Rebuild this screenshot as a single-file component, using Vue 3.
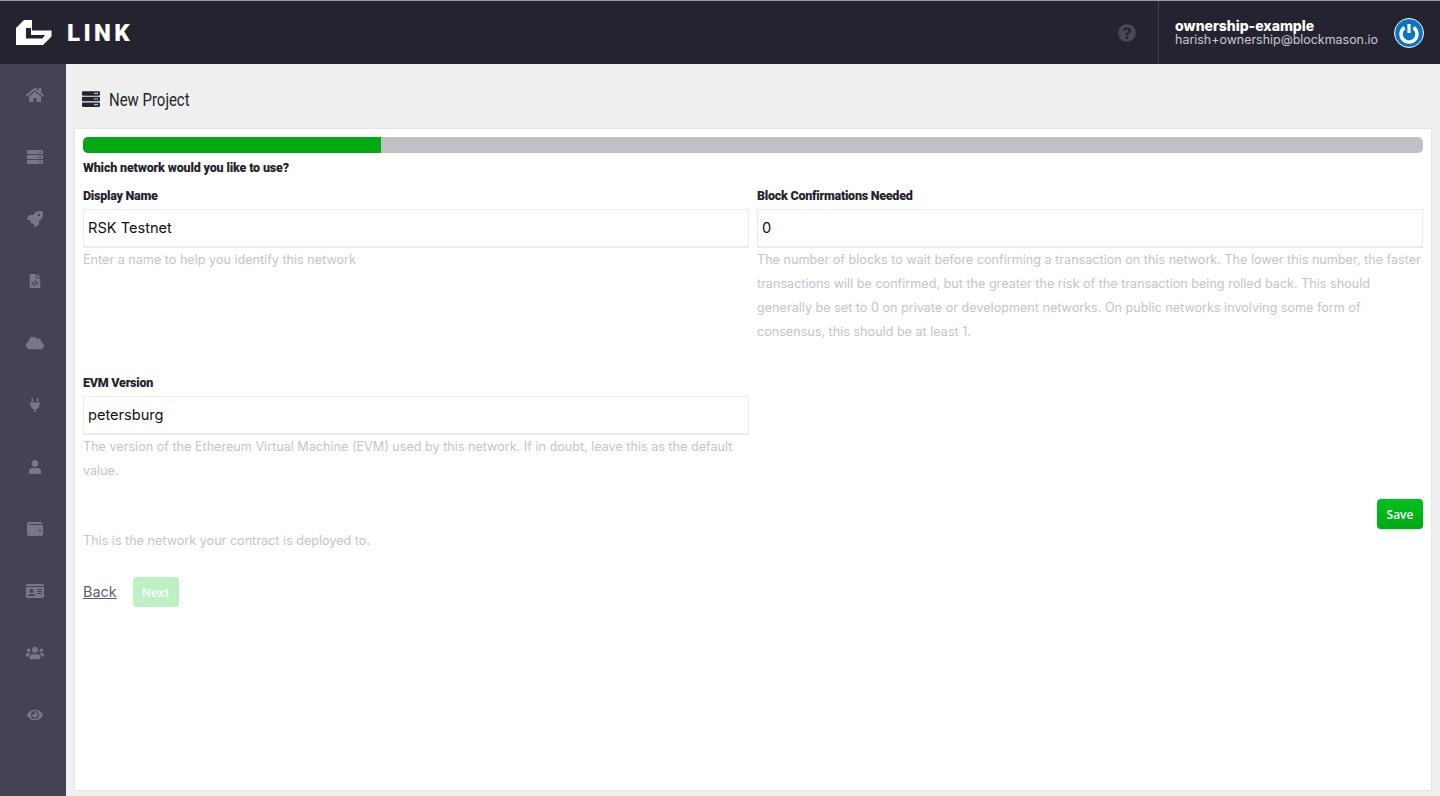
<script setup>
const navIcons = [
  { name: 'home', box: '0 0 576 512', size: 18, d: 'M280.37 148.26L96 300.11V464a16 16 0 0 0 16 16l112.06-.29a16 16 0 0 0 15.92-16V368a16 16 0 0 1 16-16h64a16 16 0 0 1 16 16v95.64a16 16 0 0 0 16 16.05L464 480a16 16 0 0 0 16-16V300L295.67 148.26a12.19 12.19 0 0 0-15.3 0zM571.6 251.47L488 182.56V44.05a12 12 0 0 0-12-12h-56a12 12 0 0 0-12 12v72.61L318.47 43a48 48 0 0 0-61 0L4.34 251.47a12 12 0 0 0-1.6 16.9l25.5 31A12 12 0 0 0 45.15 301l235.22-193.74a12.19 12.19 0 0 1 15.3 0L530.9 301a12 12 0 0 0 16.9-1.6l25.5-31a12 12 0 0 0-1.7-16.93z' },
  { name: 'server', box: '0 0 512 512', size: 16, d: 'M480 160H32c-17.673 0-32-14.327-32-32V64c0-17.673 14.327-32 32-32h448c17.673 0 32 14.327 32 32v64c0 17.673-14.327 32-32 32zm-48-88c-13.255 0-24 10.745-24 24s10.745 24 24 24 24-10.745 24-24-10.745-24-24-24zm-64 0c-13.255 0-24 10.745-24 24s10.745 24 24 24 24-10.745 24-24-10.745-24-24-24zm112 248H32c-17.673 0-32-14.327-32-32v-64c0-17.673 14.327-32 32-32h448c17.673 0 32 14.327 32 32v64c0 17.673-14.327 32-32 32zm-48-88c-13.255 0-24 10.745-24 24s10.745 24 24 24 24-10.745 24-24-10.745-24-24-24zm-64 0c-13.255 0-24 10.745-24 24s10.745 24 24 24 24-10.745 24-24-10.745-24-24-24zm112 248H32c-17.673 0-32-14.327-32-32v-64c0-17.673 14.327-32 32-32h448c17.673 0 32 14.327 32 32v64c0 17.673-14.327 32-32 32zm-48-88c-13.255 0-24 10.745-24 24s10.745 24 24 24 24-10.745 24-24-10.745-24-24-24zm-64 0c-13.255 0-24 10.745-24 24s10.745 24 24 24 24-10.745 24-24-10.745-24-24-24z' },
  { name: 'rocket', box: '0 0 512 512', size: 16, d: 'M505.12 19.09c-1.19-5.53-6.66-11-12.21-12.19C460.72 0 435.51 0 410.41 0 307.18 0 245.27 55.2 199.05 128H94.84c-16.35.02-35.56 11.88-42.89 26.48L2.52 253.3A28.4 28.4 0 0 0 0 264a24 24 0 0 0 24.01 24h103.81l-22.47 22.47c-11.37 11.36-13 32.26 0 45.25l50.9 50.91c11.16 11.19 32.16 13.16 45.28 0L224 384.16V488a24 24 0 0 0 24 24 28.56 28.56 0 0 0 10.71-2.52l98.73-49.39c14.63-7.3 26.51-26.5 26.51-42.86V312.8c72.6-46.31 128.03-108.41 128.03-211.1.1-25.2.1-50.4-6.86-82.61zM384.04 168a40 40 0 1 1 40.01-40 40.02 40.02 0 0 1-40.01 40z' },
  { name: 'file-code', box: '0 0 384 512', size: 14, d: 'M384 121.941V128H256V0h6.059c6.365 0 12.47 2.529 16.971 7.029l97.941 97.941A24.005 24.005 0 0 1 384 121.941zM248 160c-13.2 0-24-10.8-24-24V0H24C10.745 0 0 10.745 0 24v464c0 13.255 10.745 24 24 24h336c13.255 0 24-10.745 24-24V160H248zM123.206 400.505a5.4 5.4 0 0 1-7.633.246l-64.866-60.812a5.4 5.4 0 0 1 0-7.879l64.866-60.812a5.4 5.4 0 0 1 7.633.246l19.579 20.885a5.4 5.4 0 0 1-.372 7.747L101.65 336l40.763 35.874a5.4 5.4 0 0 1 .372 7.747l-19.579 20.884zm51.295 50.479l-27.453-7.97a5.402 5.402 0 0 1-3.681-6.692l61.44-211.626a5.402 5.402 0 0 1 6.692-3.681l27.452 7.97a5.4 5.4 0 0 1 3.68 6.692l-61.44 211.626a5.397 5.397 0 0 1-6.69 3.681zm160.792-111.045l-64.866 60.812a5.4 5.4 0 0 1-7.633-.246l-19.58-20.885a5.4 5.4 0 0 1 .372-7.747L284.35 336l-40.763-35.874a5.4 5.4 0 0 1-.372-7.747l19.58-20.885a5.4 5.4 0 0 1 7.633-.246l64.866 60.812a5.4 5.4 0 0 1-.001 7.879z' },
  { name: 'cloud', box: '0 0 640 512', size: 18, d: 'M537.6 226.6c4.1-10.7 6.4-22.4 6.4-34.6 0-53-43-96-96-96-19.7 0-38.1 6-53.3 16.2C367 64.2 315.3 32 256 32c-88.4 0-160 71.6-160 160 0 2.7.1 5.4.2 8.1C40.2 219.8 0 273.2 0 336c0 79.5 64.5 144 144 144h368c70.7 0 128-57.3 128-128 0-61.9-44-113.6-102.4-125.4z' },
  { name: 'plug', box: '0 0 384 512', size: 14, d: 'M320 32a32 32 0 0 0-64 0v96h64zm48 128H16a16 16 0 0 0-16 16v32a16 16 0 0 0 16 16h16v32a160.07 160.07 0 0 0 128 156.8V512h64v-99.2A160.07 160.07 0 0 0 352 256v-32h16a16 16 0 0 0 16-16v-32a16 16 0 0 0-16-16zM128 32a32 32 0 0 0-64 0v96h64z' },
  { name: 'user', box: '0 0 448 512', size: 14, d: 'M224 256c70.7 0 128-57.3 128-128S294.7 0 224 0 96 57.3 96 128s57.3 128 128 128zm89.6 32h-16.7c-22.2 10.2-46.9 16-72.9 16s-50.6-5.8-72.9-16h-16.7C60.2 288 0 348.2 0 422.4V464c0 26.5 21.5 48 48 48h352c26.5 0 48-21.5 48-48v-41.6c0-74.2-60.2-134.4-134.4-134.4z' },
  { name: 'wallet', box: '0 0 512 512', size: 16, d: 'M461.2 128H80c-8.84 0-16-7.16-16-16s7.16-16 16-16h384c8.84 0 16-7.16 16-16 0-26.51-21.49-48-48-48H64C28.65 32 0 60.65 0 96v320c0 35.35 28.65 64 64 64h397.2c28.02 0 50.8-21.53 50.8-48V176c0-26.47-22.78-48-50.8-48zM416 340c-17.67 0-32-14.33-32-32s14.33-32 32-32 32 14.33 32 32-14.33 32-32 32z' },
  { name: 'id-card', box: '0 0 576 512', size: 18, d: 'M528 32H48C21.5 32 0 53.5 0 80v16h576V80c0-26.5-21.5-48-48-48zM0 432c0 26.5 21.5 48 48 48h480c26.5 0 48-21.5 48-48V128H0v304zm352-232c0-4.4 3.6-8 8-8h144c4.4 0 8 3.6 8 8v16c0 4.4-3.6 8-8 8H360c-4.4 0-8-3.6-8-8v-16zm0 64c0-4.4 3.6-8 8-8h144c4.4 0 8 3.6 8 8v16c0 4.4-3.6 8-8 8H360c-4.4 0-8-3.6-8-8v-16zm0 64c0-4.4 3.6-8 8-8h144c4.4 0 8 3.6 8 8v16c0 4.4-3.6 8-8 8H360c-4.4 0-8-3.6-8-8v-16zM176 192c35.3 0 64 28.7 64 64s-28.7 64-64 64-64-28.7-64-64 28.7-64 64-64zM67.1 396.2C75.5 370.5 99.6 352 128 352h8.2c12.3 5.1 25.7 8 39.8 8s27.6-2.9 39.8-8h8.2c28.4 0 52.5 18.5 60.9 44.2 3.2 9.9-5.2 19.8-15.6 19.8H82.7c-10.4 0-18.8-10-15.6-19.8z' },
  { name: 'users', box: '0 0 640 512', size: 18, d: 'M96 224c35.3 0 64-28.7 64-64s-28.7-64-64-64-64 28.7-64 64 28.7 64 64 64zm448 0c35.3 0 64-28.7 64-64s-28.7-64-64-64-64 28.7-64 64 28.7 64 64 64zm32 32h-64c-17.6 0-33.5 7.1-45.1 18.6 40.3 22.1 68.9 62 75.1 109.4h66c17.7 0 32-14.3 32-32v-32c0-35.3-28.7-64-64-64zm-256 0c61.9 0 112-50.1 112-112S381.9 32 320 32 208 82.1 208 144s50.1 112 112 112zm76.8 32h-8.3c-20.8 10-43.9 16-68.5 16s-47.6-6-68.5-16h-8.3C179.6 288 128 339.6 128 403.2V432c0 26.5 21.5 48 48 48h288c26.5 0 48-21.5 48-48v-28.8c0-63.6-51.6-115.2-115.2-115.2zm-223.7-13.4C161.5 263.1 145.6 256 128 256H64c-35.3 0-64 28.7-64 64v32c0 17.7 14.3 32 32 32h65.9c6.3-47.4 34.9-87.3 75.2-109.4z' },
  { name: 'eye', box: '0 0 576 512', size: 16, d: 'M572.52 241.4C518.29 135.59 410.93 64 288 64S57.68 135.64 3.48 241.41a32.35 32.35 0 0 0 0 29.19C57.71 376.41 165.07 448 288 448s230.32-71.64 284.52-177.41a32.35 32.35 0 0 0 0-29.19zM288 400a144 144 0 1 1 144-144 143.93 143.93 0 0 1-144 144zm0-240a95.31 95.31 0 0 0-25.31 3.79 47.85 47.85 0 0 1-66.9 66.9A95.78 95.78 0 1 0 288 160z' }
]
const serverPath = navIcons[1].d
const questionPath = 'M504 256c0 136.997-111.043 248-248 248S8 392.997 8 256C8 119.083 119.043 8 256 8s248 111.083 248 248zM262.655 90c-54.497 0-89.255 22.957-116.549 63.758-3.536 5.286-2.353 12.415 2.715 16.258l34.699 26.31c5.205 3.947 12.621 3.008 16.665-2.122 17.864-22.658 30.113-35.797 57.303-35.797 20.429 0 45.698 13.148 45.698 32.958 0 14.976-12.363 22.667-32.534 33.976C247.128 238.528 216 254.941 216 296v4c0 6.627 5.373 12 12 12h56c6.627 0 12-5.373 12-12v-1.333c0-28.462 83.186-29.647 83.186-106.667 0-58.002-60.165-102-116.531-102zM256 338c-25.365 0-46 20.635-46 46 0 25.364 20.635 46 46 46s46-20.636 46-46c0-25.365-20.635-46-46-46z'
</script>

<template>
  <div class="page">
    <header class="topbar">
      <div class="brand">
        <svg class="logo" viewBox="0 0 36 25" width="36" height="25">
          <path fill="#fff" fill-rule="evenodd" d="M0 8 L8 0 H16 V10.5 H35.5 V16.5 L27 25 H0 Z M10 8 H15 V15 H29 L26.5 18.5 H10 Z" />
        </svg>
        <span class="brand_name">LINK</span>
      </div>
      <div class="topbar_right">
        <svg class="help" viewBox="0 0 512 512" width="18" height="18"><path fill="#4b4956" :d="questionPath" /></svg>
        <div class="account">
          <div class="account_text">
            <div class="account_name">ownership-example</div>
            <div class="account_mail">harish+ownership@blockmason.io</div>
          </div>
          <svg class="avatar" viewBox="0 0 30 30" width="30" height="30">
            <circle cx="15" cy="15" r="14.5" fill="#0a74bd" stroke="#fff" stroke-width="1" />
            <path d="M10.5 9.5 A8 8 0 1 0 19.5 9.5" fill="none" stroke="#fff" stroke-width="3.4" />
            <rect x="13.4" y="6" width="3.2" height="9" fill="#fff" />
          </svg>
        </div>
      </div>
    </header>
    <div class="body_row">
      <nav class="sidebar">
        <div v-for="icon in navIcons" :key="icon.name" class="nav_item">
          <svg :viewBox="icon.box" :width="icon.size" :height="icon.size"><path fill="#7a7689" :d="icon.d" /></svg>
        </div>
      </nav>
      <main class="main">
        <div class="page_title">
          <svg viewBox="0 0 512 512" width="18" height="18"><path fill="#252330" :d="serverPath" /></svg>
          <h1>New Project</h1>
        </div>
        <section class="card">
          <div class="progress"><div class="progress_fill"></div></div>
          <h2 class="question">Which network would you like to use?</h2>
          <div class="fields">
            <div class="field">
              <label>Display Name</label>
              <div class="input">RSK Testnet</div>
              <p class="hint">Enter a name to help you identify this network</p>
            </div>
            <div class="field">
              <label>Block Confirmations Needed</label>
              <div class="input">0</div>
              <p class="hint">The number of blocks to wait before confirming a transaction on this network. The lower this number, the faster transactions will be confirmed, but the greater the risk of the transaction being rolled back. This should generally be set to 0 on private or development networks. On public networks involving some form of consensus, this should be at least 1.</p>
            </div>
            <div class="field">
              <label>EVM Version</label>
              <div class="input">petersburg</div>
              <p class="hint">The version of the Ethereum Virtual Machine (EVM) used by this network. If in doubt, leave this as the default value.</p>
            </div>
          </div>
          <div class="save_row"><button class="btn">Save</button></div>
          <p class="hint note">This is the network your contract is deployed to.</p>
          <div class="actions">
            <a class="back">Back</a>
            <button class="btn btn_off">Next</button>
          </div>
        </section>
      </main>
    </div>
  </div>
</template>

<style>
html, body { margin: 0; background: #efefef; }
</style>

<style scoped>
.page {
  height: 796px;
  display: flex;
  flex-direction: column;
  overflow: hidden;
  font-family: "Inter", "Liberation Sans", sans-serif;
  color: #252330;
}
.topbar {
  height: 63px;
  flex: none;
  border-top: 1px solid #9a9a9a;
  background: #252330;
  display: flex;
  justify-content: space-between;
}
.brand {
  display: flex;
  align-items: center;
  padding-left: 16px;
}
.brand_name {
  margin-left: 15px;
  color: #fff;
  font: 900 24px "Roboto", sans-serif;
  letter-spacing: 3.4px;
}
.topbar_right {
  display: flex;
  align-items: center;
}
.help {
  margin-right: 22px;
}
.account {
  height: 63px;
  box-sizing: border-box;
  border-left: 1px solid #3f3d4a;
  padding: 0 16px 0 16px;
  display: flex;
  align-items: center;
  gap: 16px;
}
.account_name {
  color: #fff;
  font-size: 14px;
  font-weight: 800;
  line-height: 14px;
}
.account_mail {
  color: #c9c9d2;
  font-size: 12.45px;
  line-height: 14px;
}
.body_row {
  flex: 1;
  display: flex;
  min-height: 0;
}
.sidebar {
  width: 66px;
  flex: none;
  background: #464255;
}
.nav_item {
  height: 62px;
  display: flex;
  align-items: center;
  justify-content: center;
  margin-left: 3px;
}
.main {
  flex: 1;
  padding: 0 8px 5px 8px;
  display: flex;
  flex-direction: column;
  min-width: 0;
}
.page_title {
  height: 64px;
  box-sizing: border-box;
  flex: none;
  display: flex;
  align-items: center;
  gap: 9px;
  padding: 6px 0 0 8px;
}
.page_title h1 {
  margin: 0;
  font: 400 18px "Roboto", sans-serif;
  transform: scaleX(.83);
  transform-origin: left center;
}
.card {
  flex: 1;
  background: #fff;
  border: 1px solid #e6e6e6;
  padding: 8px;
}
.progress {
  height: 16px;
  border-radius: 5px;
  background: #c1c0c6;
  overflow: hidden;
}
.progress_fill {
  width: 298px;
  height: 100%;
  background: #03a913;
}
.question {
  margin: 7px 0 0;
  font: 900 12.5px/16px "Roboto", sans-serif;
  letter-spacing: -.16px;
}
.fields {
  display: grid;
  grid-template-columns: 1fr 1fr;
  column-gap: 8px;
  row-gap: 19px;
}
.field {
  margin-top: 12px;
}
.field label {
  display: block;
  font: 900 12.5px/16px "Roboto", sans-serif;
  letter-spacing: -.25px;
  margin-bottom: 5px;
}
.input {
  height: 39px;
  box-sizing: border-box;
  border: 1px solid #ececec;
  border-bottom-width: 2px;
  padding: 0 4px;
  font-size: 14.6px;
  line-height: 37px;
  color: #111;
}
.hint {
  margin: 0;
  font-size: 12.62px;
  line-height: 24px;
  color: #c5c4c9;
}
.save_row {
  display: flex;
  justify-content: flex-end;
  margin-top: 16px;
}
.btn {
  width: 46px;
  height: 30px;
  padding: 0;
  border: 0;
  border-radius: 4px;
  background: linear-gradient(#00c21c, #00a914);
  color: #fff;
  font: 600 12px "Open Sans", sans-serif;
  box-shadow: 0 1px 2px rgba(0, 0, 0, .15);
}
.note {
  margin-top: 0;
}
.actions {
  display: flex;
  align-items: center;
  gap: 16px;
  margin-top: 24px;
}
.back {
  margin-bottom: 2px;
  color: #5f5b6e;
  font-size: 14.4px;
  text-decoration: underline;
}
.btn_off {
  background: #bdf0c4;
  box-shadow: none;
}
</style>
